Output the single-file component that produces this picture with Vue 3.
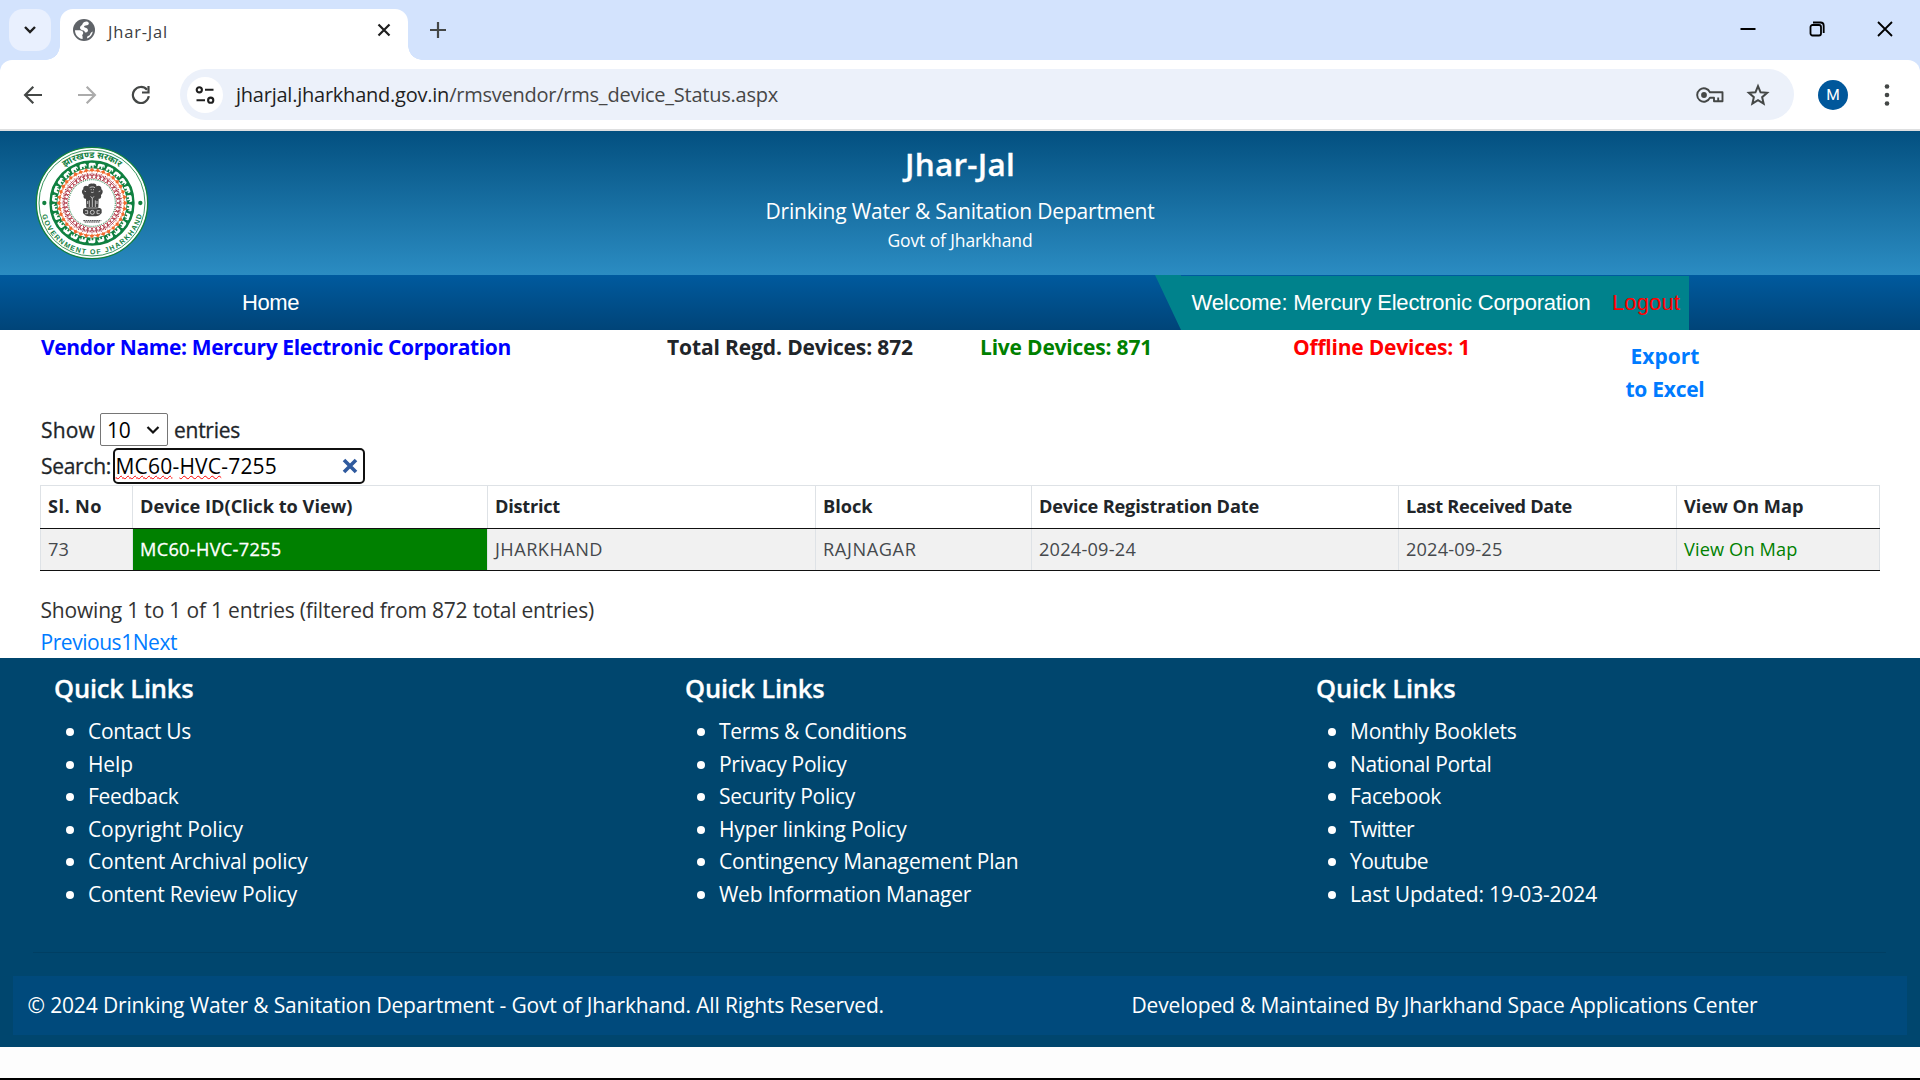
<script setup>
const vFit = {
  mounted(el, { value }) {
    const n = el.textContent.trim().length
    const natural = el.getBoundingClientRect().width
    el.style.letterSpacing = `${((value - natural) / n).toFixed(3)}px`
  },
}

const columns = [
  { label: 'Sl. No', w: 54 },
  { label: 'Device ID(Click to View)', w: 212.5 },
  { label: 'District', w: 65 },
  { label: 'Block', w: 49.5 },
  { label: 'Device Registration Date', w: 220 },
  { label: 'Last Received Date', w: 166 },
  { label: 'View On Map', w: 119.5 },
]

const footerColumns = [
  [['Contact Us', 103], ['Help', 45], ['Feedback', 90.5], ['Copyright Policy', 155], ['Content Archival policy', 219.5], ['Content Review Policy', 209]],
  [['Terms & Conditions', 187.5], ['Privacy Policy', 127.5], ['Security Policy', 136], ['Hyper linking Policy', 187.5], ['Contingency Management Plan', 299.5], ['Web Information Manager', 252]],
  [['Monthly Booklets', 166.5], ['National Portal', 141.5], ['Facebook', 91], ['Twitter', 64], ['Youtube', 78], ['Last Updated: 19-03-2024', 247]],
]
</script>

<template>
  <div class="screen">
    <div class="tabstrip">
      <div class="tabsearch">
        <svg width="14" height="10" viewBox="0 0 14 10"><path d="M2 2l5 5 5-5" fill="none" stroke="#1f1f1f" stroke-width="2.4" /></svg>
      </div>
      <div class="tab">
        <svg class="globe" width="24" height="24" viewBox="0 0 24 24">
          <circle cx="12" cy="12" r="11" fill="#5f6368" />
          <path d="M3 12.200H7.500C10 12.400 11.500 13.400 11.200 15.200C10.900 16.600 9.600 17 10.600 18.600V21C6 20.300 2.900 16.500 3 12.200Z" fill="#fff" />
          <path d="M15.200 3.600C17 4.300 17.500 6 16 7C14.800 7.600 12.500 7.200 12 8.600C12 10 15 9.600 15.800 11.400C16.400 13 15.500 14.300 13.600 14.400C12.200 14.400 13 12.600 11.500 12.400C9.500 12.200 7.800 11.200 8 9.400C8.200 7.600 9.700 7.800 10.300 6.400C10.900 4.600 13 3.200 15.200 3.600Z" fill="#fff" />
          <path d="M20.800 13.500C20.300 16.600 18.300 19.300 15.400 20.400C14.600 18.900 15.400 18 16.800 17.700C18.600 17.200 17.800 14.600 20.800 13.500Z" fill="#fff" />
        </svg>
        <span class="tab-title"><span v-fit="60">Jhar-Jal</span></span>
        <svg class="tab-close" width="14" height="14" viewBox="0 0 14 14"><path d="M1.500 1.500l11 11M12.500 1.500l-11 11" stroke="#1f1f1f" stroke-width="2.200" /></svg>
      </div>
      <svg class="newtab" width="18" height="18" viewBox="0 0 18 18"><path d="M9 1v16M1 9h16" stroke="#444746" stroke-width="2.200" /></svg>
      <div class="window-buttons">
        <svg width="16" height="16" viewBox="0 0 16 16"><path d="M0.500 8h15" stroke="#000" stroke-width="2" /></svg>
        <svg width="16" height="16" viewBox="0 0 16 16"><rect x="1.500" y="4" width="10.500" height="10.500" rx="2" fill="none" stroke="#000" stroke-width="1.800" /><path d="M4 1.500h7.500a3.200 3.200 0 0 1 3.200 3.200V12" fill="none" stroke="#000" stroke-width="1.800" /></svg>
        <svg width="16" height="16" viewBox="0 0 16 16"><path d="M1 1l14 14M15 1L1 15" stroke="#000" stroke-width="1.800" /></svg>
      </div>
    </div>

    <div class="toolbar-back">
      <div class="toolbar">
        <svg class="nav-ico" width="20" height="20" viewBox="0 0 20 20"><path d="M19 10H2.500M10.300 1.800L2.100 10l8.200 8.200" fill="none" stroke="#444746" stroke-width="2.200" /></svg>
        <svg class="nav-ico" width="20" height="20" viewBox="0 0 20 20"><path d="M1 10h16.500M9.700 1.800l8.200 8.200-8.200 8.200" fill="none" stroke="#ababab" stroke-width="2.200" /></svg>
        <svg class="nav-ico" width="20" height="20" viewBox="0 0 20 20"><path d="M17.800 11.200A8 8 0 1 1 16 4.800" fill="none" stroke="#444746" stroke-width="2.200" /><path d="M17.500 1v6.500H11" fill="none" stroke="#444746" stroke-width="2.200" /></svg>
        <div class="omnibox">
          <div class="siteinfo">
            <svg width="20" height="20" viewBox="0 0 20 20" fill="none" stroke="#1f1f1f" stroke-width="2.100"><circle cx="4.300" cy="4.800" r="2.600" /><path d="M10 4.800h8.500M1.500 15.200H10" /><circle cx="15.700" cy="15.200" r="2.600" /></svg>
          </div>
          <span class="url"><span v-fit="542">jharjal.jharkhand.gov.in<span class="path">/rmsvendor/rms_device_Status.aspx</span></span></span>
          <svg class="key" width="28" height="16" viewBox="0 0 28 16" fill="none" stroke="#444746" stroke-width="1.900"><path d="M14 5.300A6.700 6.700 0 1 0 14 10.700H18V14.200H26.500V5.300Z" stroke-linejoin="round" /><circle cx="8" cy="8" r="2.900" fill="#444746" stroke="none" /><path d="M22.200 14.200V10.500" /></svg>
          <svg class="star" width="24" height="24" viewBox="0 0 24 24"><path d="M12 3.200l2.550 6.100 6.600.56-5 4.350 1.500 6.440L12 17.230l-5.650 3.420 1.500-6.440-5-4.350 6.600-.56z" fill="none" stroke="#444746" stroke-width="2" stroke-linejoin="miter" /></svg>
        </div>
        <div class="avatar">M</div>
        <svg class="dots" width="6" height="24" viewBox="0 0 6 24" fill="#444746"><circle cx="3" cy="3.500" r="2.300" /><circle cx="3" cy="12" r="2.300" /><circle cx="3" cy="20.500" r="2.300" /></svg>
      </div>
    </div>

    <header class="banner">
      <svg class="seal" width="114" height="114" viewBox="-171 -171 342 342">
        <defs>
          <path id="arc-top" d="M-135 0A135 135 0 0 1 135 0" />
          <path id="arc-bottom" d="M-154 0A154 154 0 0 0 154 0" />
        </defs>
        <circle r="167" fill="#fff" stroke="#12803f" stroke-width="4" />
        <circle r="159" fill="none" stroke="#12803f" stroke-width="2.500" />
        <text class="seal-top" text-anchor="middle"><textPath href="#arc-top" startOffset="50%">झारखण्ड सरकार</textPath></text>
        <text class="seal-bottom"><textPath href="#arc-bottom" startOffset="36" textLength="412">GOVERNMENT OF JHARKHAND</textPath></text>
        <circle cx="-143" cy="0" r="6.500" fill="#12803f" />
        <circle cx="145" cy="0" r="6.500" fill="#12803f" />
        <circle r="116" fill="none" stroke="#0f8040" stroke-width="24" />
        <g v-for="i in 26" :key="'e' + i" :transform="`rotate(${i * 13.846}) translate(0 -115)`">
          <path d="M-10 9V-2C-9 -6 -2 -6 4 -5C9 -7 12 -4 11 4H8V0L5 2V9H1V3H-4V9Z" fill="#fff" />
        </g>
        <g v-for="i in 36" :key="'o' + i" :transform="`rotate(${i * 10}) translate(0 -99)`">
          <path d="M-9 5C-7 -2 -2 -2 0 -8C2 -2 7 -1 9 4L3 3L0 7L-3 3Z" fill="#f26a2e" />
        </g>
        <g v-for="i in 40" :key="'r' + i" :transform="`rotate(${i * 9}) translate(0 -82)`">
          <path d="M0 -9V4M-5 -6L-4 0L4 0L5 -6M-4 10L0 3L4 10" fill="none" stroke="#ab2b3a" stroke-width="2.400" />
        </g>
        <circle r="70" fill="#fff" stroke="#12803f" stroke-width="3" stroke-dasharray="3 3" />
        <g fill="#444" transform="translate(1 0)">
          <path d="M-12 -50C-14 -57 -6 -59 0 -58C7 -59 14 -57 12 -50C20 -54 29 -50 27 -41C34 -37 31 -27 26 -24C28 -16 24 -11 19 -13L18 14H-18L-19 -13C-24 -11 -28 -16 -26 -24C-31 -27 -34 -37 -27 -41C-29 -50 -20 -54 -12 -50Z" />
          <path d="M-28 21C-27 14 -19 14 -14 16H14C19 14 27 14 28 21V30C24 36 17 40 10 40H-10C-17 40 -24 36 -28 30Z" />
        </g>
        <g fill="none" stroke="#fff" stroke-width="2" transform="translate(1 0)">
          <path d="M-8 -46C-4 -49 4 -49 8 -46M-5 -40h3M2 -40h3M-4 -33C-2 -31 2 -31 4 -33M-24 -36l5 2M24 -36l-5 2M-9 -8V12M9 -8V12M-14 -6V3M14 -6V3M0 -14V12M-5 -20L0 -14L5 -20" />
          <circle cx="0" cy="28" r="6" />
          <path d="M-22 23h8v9h-8M22 23h-8v9h8" />
        </g>
        <path d="M-26 53H28M-22 57H24" stroke="#3c3c3c" stroke-width="3" stroke-dasharray="5 1.500" />
      </svg>
      <div class="banner-text">
        <h1><span v-fit="110">Jhar-Jal</span></h1>
        <p class="dept"><span v-fit="389">Drinking Water &amp; Sanitation Department</span></p>
        <p class="govt"><span v-fit="145">Govt of Jharkhand</span></p>
      </div>
    </header>

    <nav class="nav">
      <a class="home"><span v-fit="57">Home</span></a>
      <div class="welcome">
        <span v-fit="399">Welcome: Mercury Electronic Corporation</span>
        <a class="logout"><span v-fit="68">Logout</span></a>
      </div>
    </nav>

    <main class="content">
      <div class="summary">
        <div class="vendor"><span v-fit="470">Vendor Name: Mercury Electronic Corporation</span></div>
        <div class="total"><span v-fit="246">Total Regd. Devices: 872</span></div>
        <div class="live"><span v-fit="172">Live Devices: 871</span></div>
        <div class="offline"><span v-fit="177">Offline Devices: 1</span></div>
        <a class="export"><span v-fit="69">Export</span><span v-fit="79">to Excel</span></a>
      </div>

      <div class="length">
        <span class="label" v-fit="54">Show</span>
        <div class="select">
          <span v-fit="23.5">10</span>
          <svg width="14" height="10" viewBox="0 0 14 10"><path d="M1.500 2l5.500 5.500L12.500 2" fill="none" stroke="#111" stroke-width="2.200" /></svg>
        </div>
        <span class="label" v-fit="66">entries</span>
      </div>
      <div class="search">
        <span class="label" v-fit="70">Search:</span>
        <div class="search-box">
          <span v-fit="161.5"><u>MC60</u>-<u>HVC</u>-7255</span>
          <svg width="16" height="16" viewBox="0 0 16 16"><path d="M2 2l12 12M14 2L2 14" stroke="#2f5a9e" stroke-width="3.600" /></svg>
        </div>
      </div>

      <table class="devices">
        <colgroup><col v-for="(c, i) in columns" :key="c.label" :class="'c' + i" /></colgroup>
        <thead>
          <tr><th v-for="c in columns" :key="c.label"><span v-fit="c.w">{{ c.label }}</span></th></tr>
        </thead>
        <tbody>
          <tr>
            <td><span v-fit="21">73</span></td>
            <td class="device-id"><span v-fit="141.5">MC60-HVC-7255</span></td>
            <td><span v-fit="108">JHARKHAND</span></td>
            <td><span v-fit="93.5">RAJNAGAR</span></td>
            <td><span v-fit="97">2024-09-24</span></td>
            <td><span v-fit="96.5">2024-09-25</span></td>
            <td class="map"><span v-fit="113.5">View On Map</span></td>
          </tr>
        </tbody>
      </table>

      <div class="info"><span v-fit="553.5">Showing 1 to 1 of 1 entries (filtered from 872 total entries)</span></div>
      <div class="paging"><span v-fit="136.5"><a>Previous</a><a>1</a><a>Next</a></span></div>
    </main>

    <footer class="footer">
      <div class="links">
        <section v-for="(items, i) in footerColumns" :key="i">
          <h2><span v-fit="139.5">Quick Links</span></h2>
          <ul>
            <li v-for="[label, w] in items" :key="label"><span v-fit="w">{{ label }}</span></li>
          </ul>
        </section>
      </div>
      <div class="rule"></div>
      <div class="copyright">
        <span class="left"><span v-fit="856.5">© 2024 Drinking Water &amp; Sanitation Department - Govt of Jharkhand. All Rights Reserved.</span></span>
        <span v-fit="626">Developed &amp; Maintained By Jharkhand Space Applications Center</span>
      </div>
    </footer>
    <div class="page-end"></div>
    <div class="taskbar-edge"></div>
  </div>
</template>

<style>
body { margin: 0; background: #fff; overflow: hidden; }
</style>

<style scoped>
* { box-sizing: border-box; }
.screen {
  width: 1920px; height: 1080px; overflow: hidden;
  display: flex; flex-direction: column;
  font-family: "Open Sans", "Noto Sans", sans-serif; font-size: 21px;
  color: #212529; background: #fff; white-space: nowrap;
}
.screen > * { flex: none; }
svg { display: block; flex: none; }
h1, h2, p, ul { margin: 0; padding: 0; }

.tabstrip { height: 60px; background: #d3e3fd; display: flex; padding: 9px 27px 0 9px; }
.tabsearch { width: 42px; height: 42px; border-radius: 14px; background: #e9f0fe; display: flex; align-items: center; justify-content: center; }
.tab { position: relative; width: 348px; height: 51px; margin-left: 9px; background: #fff; border-radius: 13px 13px 0 0; display: flex; align-items: center; padding: 0 17px 9px 12px; }
.tab::before, .tab::after { content: ""; position: absolute; bottom: 0; width: 14px; height: 14px; }
.tab::before { left: -14px; background: radial-gradient(circle at 0 0, transparent 13.5px, #fff 14px); }
.tab::after { right: -14px; background: radial-gradient(circle at 100% 0, transparent 13.500px, #fff 14px); }
.tab-title { flex: 1; margin-left: 12px; padding-top: 2px; font-size: 16.500px; color: #3c4043; }
.newtab { margin: 12px 0 0 21px; }
.window-buttons { margin: 12px 0 0 auto; display: flex; gap: 52.500px; }

.toolbar-back { background: #d3e3fd; height: 71px; }
.toolbar { height: 71px; background: #fff; border-radius: 12px 12px 0 0; border-bottom: 2px solid #dedfe0; display: flex; align-items: center; padding-left: 23px; }
.nav-ico { margin-right: 34px; }
.nav-ico:nth-child(3) { margin-right: 29px; }
.omnibox { width: 1614px; height: 51px; border-radius: 26px; background: #ecf1fa; display: flex; align-items: center; padding: 0 24px 0 7px; }
.siteinfo { width: 36px; height: 36px; border-radius: 50%; background: #fff; display: flex; align-items: center; justify-content: center; }
.url { flex: 1; margin-left: 13px; font-size: 20px; color: #1f1f1f; }
.url .path { color: #474747; }
.key { margin-right: 22px; }
.avatar { width: 30px; height: 30px; margin-left: 24px; border-radius: 50%; background: #00579b; color: #fff; font: 15.500px/30px Roboto, sans-serif; text-align: center; }
.dots { margin-left: 36px; }

.banner { height: 144px; background: linear-gradient(#035080, #2b8cc2); display: grid; grid-template-columns: 200px 1520px 200px; color: #fff; }
.seal { margin: 15px 0 0 35px; }
.seal-top { font: bold 27px "Noto Sans Devanagari", "Noto Sans", sans-serif; fill: #12803f; }
.seal-bottom { font: bold 21px "Liberation Sans", sans-serif; fill: #12803f; }
.banner-text { text-align: center; padding-top: 13px; }
h1 { font-size: 31.500px; font-weight: 600; line-height: 40px; }
.dept { margin-top: 11px; line-height: 32px; }
.govt { font-size: 17.500px; line-height: 26px; }

.nav { height: 55px; background: linear-gradient(#005a9e, #004478); display: flex; font-family: "Liberation Sans", Arial, sans-serif; font-size: 22px; color: #fff; line-height: 56px; }
.home { margin-left: 242px; width: 913px; }
.welcome { width: 534px; background: #00828c; clip-path: polygon(0 0, 26px 0, 26px 1px, 100% 1px, 100% 100%, 26px 100%); padding-left: 36.500px; display: flex; }
.logout { margin-left: 21.500px; color: #f00; }

.content { height: 328px; padding-left: 40px; }
.summary { height: 82px; display: flex; font-weight: 700; line-height: 33px; padding: 1px 0 0 1px; }
.vendor { width: 626px; color: #00f; }
.total { width: 313px; }
.live { width: 313px; color: #008000; }
.offline { width: 332px; color: #f00; }
.export { width: 80px; padding-top: 9px; color: #007bff; display: flex; flex-direction: column; align-items: center; }
.length { height: 35px; display: flex; align-items: center; padding-left: 1px; }
.label { -webkit-text-stroke: 0.300px currentColor; }
.select { width: 68px; height: 33px; margin: 0 6px 0 5px; border: 1px solid #767676; border-radius: 2px; display: flex; align-items: center; justify-content: space-between; padding: 0 7px 0 6px; color: #000; }
.search { height: 38px; display: flex; align-items: center; padding-left: 1px; }
.search-box { width: 252px; height: 36px; margin: 0 0 1px 1.500px; border: 2.500px solid #101010; border-radius: 5px; display: flex; align-items: center; justify-content: space-between; padding: 0 5px 0 1px; color: #000; line-height: 30px; }
.search-box u { text-decoration: underline wavy #f00 1.300px; text-underline-offset: 1px; text-decoration-skip-ink: none; }

.devices { width: 1839px; table-layout: fixed; border-collapse: collapse; font-size: 18.200px; }
.c0 { width: 92px; } .c1 { width: 355px; } .c2 { width: 328px; } .c3 { width: 216px; } .c4 { width: 367px; } .c5 { width: 278px; } .c6 { width: 203px; }
.devices th, .devices td { height: 42px; padding: 0 0 2px 7px; text-align: left; border: 1px solid #dee2e6; line-height: 28px; }
.devices th { height: 43px; font-weight: 700; border-bottom-color: #111; }
.devices td { background: #f1f1f1; border-bottom-color: #111; font-weight: 400; color: #45494d; }
.devices td.device-id { background: #008000; color: #fff; -webkit-text-stroke: 0.300px #fff; }
.devices td.map { color: #008000; }

.info { margin-top: 23px; line-height: 32px; color: #333; padding-left: 0.500px; }
.paging { line-height: 33px; color: #007bff; padding-left: 0.500px; }

.footer { height: 389px; background: #00466e; color: #fff; padding: 10px 13px 0; display: flex; flex-direction: column; }
.links { height: 284px; display: flex; padding-left: 41px; }
.links section { width: 631px; flex: none; }
h2 { font-size: 25.500px; font-weight: 600; line-height: 40px; }
h1, h2 { -webkit-text-stroke: 0.300px currentColor; }
ul { list-style: none; margin-top: 7px; }
li { display: flex; align-items: center; height: 32.500px; line-height: 32px; }
li::before { content: ""; width: 8px; height: 8px; margin: 2px 14px 0 12px; border-radius: 50%; background: #fff; }
.rule { height: 1px; margin: 0 21px 23px 20px; background: #003f63; }
.copyright { height: 59px; background: #004a7c; display: flex; align-items: center; padding: 0 0 2px 14.500px; }
.copyright .left { width: 1104px; }
.page-end { height: 31px; background: #fdfdfd; }
.taskbar-edge { height: 2px; background: #000; }
</style>
